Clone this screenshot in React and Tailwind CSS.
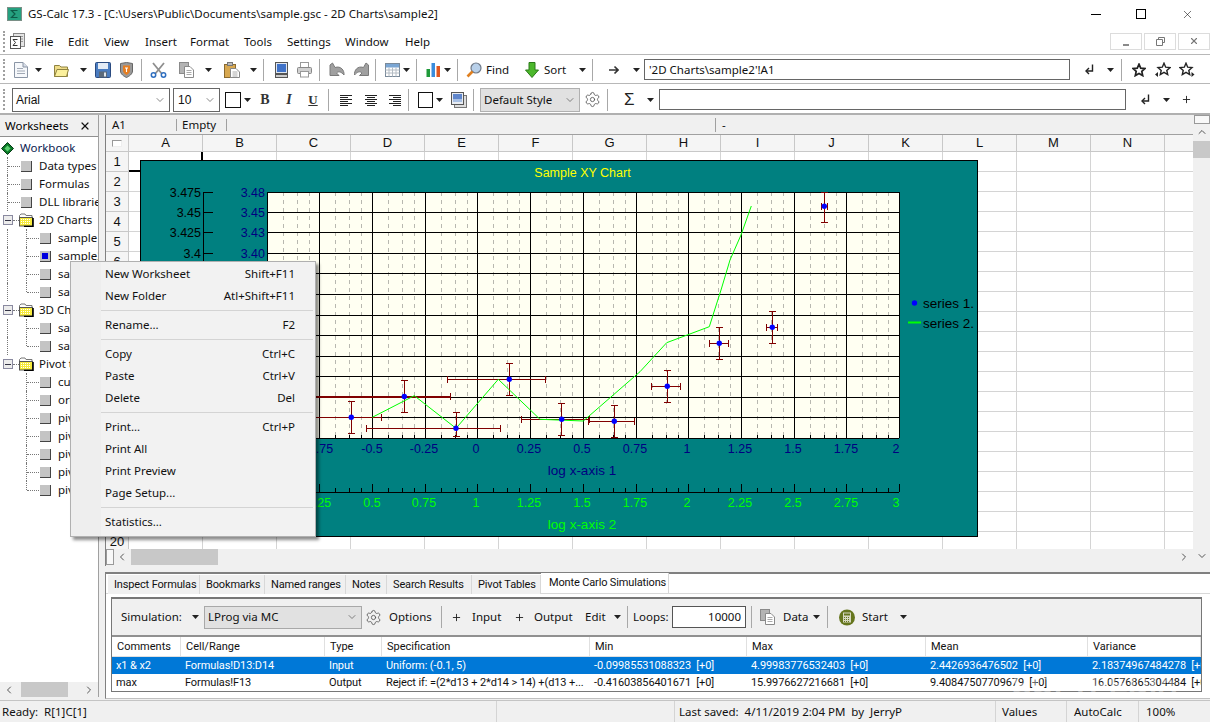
import React from "react";
import { ChevronDown, ChevronLeft, ChevronRight, ChevronUp, Settings, X, Plus } from "lucide-react";

const Caret = ({ className = "" }) => (
  <svg width="7" height="4" viewBox="0 0 7 4" className={`shrink-0 ${className}`}>
    <polygon points="0,0 7,0 3.5,4" fill="#222" />
  </svg>
);
const Sep = ({ className = "" }) => <span className={`w-px h-[22px] bg-[#a8a8a8] shrink-0 ${className}`} />;
const Gripper = () => <span className="ml-[3px] w-[2px] h-[21px] border-l-2 border-dotted border-[#a0a0a0] shrink-0" />;

const Ico = ({ w, h = 16, className = "", children }) => (
  <svg width={w} height={h} viewBox={`0 0 ${w} ${h}`} className={`shrink-0 ${className}`}>{children}</svg>
);

const Gear = ({ className = "" }) => <Settings size={17} strokeWidth={1.2} color="#555" className={`shrink-0 ${className}`} />;
const SelectChevron = () => <ChevronDown size={12} strokeWidth={1.4} color="#555" className="shrink-0" />;

const ReturnIcon = ({ className = "" }) => (
  <Ico w={9} h={11} className={className}>
    <path d="M7.5 0.5V7H2" fill="none" stroke="#222" strokeWidth="1.4" />
    <path d="M4 4L1 7L4 10" fill="none" stroke="#222" strokeWidth="1.4" />
  </Ico>
);

const AlignIcon = ({ d, className = "" }) => (
  <Ico w={14} h={12} className={className}>
    <path d={d} stroke="#222" strokeWidth="1" fill="none" />
  </Ico>
);

const CopyIcon = ({ className = "" }) => (
  <Ico w={15} className={className}>
    <rect x="0.5" y="0.5" width="9" height="11" fill="#b4b4b4" stroke="#8a8a8a" />
    <path d="M5.5 4.5H11L14.5 8V15.5H5.5Z" fill="#fff" stroke="#8a8a8a" />
    <path d="M7.5 8.5h5M7.5 10.5h5M7.5 12.5h5" stroke="#aaa" />
  </Ico>
);

const StarPath = "M7 1.2L8.7 5.2L13 5.6L9.8 8.4L10.7 12.6L7 10.4L3.3 12.6L4.2 8.4L1 5.6L5.3 5.2Z";

const menus = [
  { t: "File", c: "w-[33px]" }, { t: "Edit", c: "w-[36px]" }, { t: "View", c: "w-[41px]" },
  { t: "Insert", c: "w-[45px]" }, { t: "Format", c: "w-[54px]" }, { t: "Tools", c: "w-[43px]" },
  { t: "Settings", c: "w-[58px]" }, { t: "Window", c: "w-[60px]" }, { t: "Help", c: "w-[30px]" },
];

function TitleBar() {
  return (
    <div className="h-[28px] flex items-center bg-white shrink-0">
      <Ico w={15} h={14} className="ml-[7px]">
        <rect x="0" y="0" width="15" height="14" fill="#7a8f86" />
        <rect x="1" y="1" width="13" height="12" fill="#25a07f" />
        <path d="M10.5 3.5H4.5L8 7L4.5 10.5H10.5" fill="none" stroke="#0e5a48" strokeWidth="1.2" />
      </Ico>
      <span className="ml-[6px] text-[11.5px] text-[#111] whitespace-nowrap">GS-Calc 17.3 - [C:\Users\Public\Documents\sample.gsc - 2D Charts\sample2]</span>
      <div className="ml-auto flex items-center">
        <span className="w-[10px] h-px bg-black" />
        <span className="ml-[35px] w-[10px] h-[10px] border border-black" />
        <X size={13} strokeWidth={1} color="#000" className="ml-[35px] mr-[16px]" />
      </div>
    </div>
  );
}

function MenuBar() {
  return (
    <div className="h-[27px] flex items-center bg-white border-b border-[#b8b8b8] shrink-0">
      <Gripper />
      <Ico w={15} h={16} className="ml-[5px]">
        <rect x="3.5" y="0.5" width="11" height="13" fill="#e4e4e4" stroke="#8a8a8a" />
        <path d="M10 3.5h3M10 6h3M10 8.5h3" stroke="#999" />
        <rect x="0.5" y="3.5" width="10" height="12" fill="#fff" stroke="#555" />
        <path d="M7.5 6.5H3L5.5 9.5L3 12.5H7.5" fill="none" stroke="#333" />
      </Ico>
      <div className="ml-[10px] pt-[2px] flex text-[11.5px] text-[#111]">
        {menus.map((m) => <span key={m.t} className={m.c}>{m.t}</span>)}
      </div>
      <div className="ml-auto flex gap-[2px] text-[#8a8a8a]">
        <span className="w-[32px] h-[17px] border border-[#dcdcdc] flex items-end justify-center pb-[3px]"><span className="w-[6px] h-[2px] bg-[#8a8a8a]" /></span>
        <span className="w-[32px] h-[17px] border border-[#dcdcdc] flex items-center justify-center">
          <Ico w={9} h={9}><path d="M2.5 2.5V0.5H8.5V5.5H6.5M0.5 2.5H6.5V8.5H0.5Z" fill="none" stroke="#777" /></Ico>
        </span>
        <span className="w-[32px] h-[17px] border border-[#dcdcdc] flex items-center justify-center"><X size={10} strokeWidth={2.6} color="#777" /></span>
      </div>
    </div>
  );
}

function Toolbar1() {
  return (
    <div className="h-[29px] pt-[1px] flex items-center bg-white border-b border-[#b8b8b8] shrink-0 text-[11.5px] text-[#111]">
      <Gripper />
      <Ico w={14} className="ml-[9px]">
        <path d="M0.5 0.5H9L13.5 5V15.5H0.5Z" fill="#f6f8fb" stroke="#8a95a5" />
        <path d="M9 0.5V5H13.5" fill="#d8dee8" stroke="#8a95a5" />
        <path d="M3 6.5h6M3 9h8M3 11.5h8" stroke="#a0a8b4" />
      </Ico>
      <Caret className="ml-[7px]" />
      <Ico w={15} className="ml-[12px]">
        <path d="M0.5 3.5H5.5L7 5H13.5V14.5H0.5Z" fill="#efdc88" stroke="#8f8340" />
        <path d="M0.5 14.5L3 7.5H14.5L12.5 14.5Z" fill="#fbf09c" stroke="#8f8340" />
      </Ico>
      <Caret className="ml-[11px]" />
      <Ico w={16} className="ml-[8px]">
        <rect x="0.5" y="0.5" width="15" height="15" rx="1" fill="#4a7cc0" stroke="#2a4a80" />
        <rect x="3" y="1" width="10" height="6" fill="#e4ecf6" />
        <rect x="4" y="9.5" width="8" height="6" fill="#5c6a7a" />
        <rect x="9" y="10.5" width="2" height="4" fill="#dfe6ee" />
      </Ico>
      <Ico w={13} className="ml-[9px]">
        <path d="M0.5 1.5L6.5 0.5L12.5 1.5V9C12.5 12 9 14.5 6.5 15.5C4 14.5 0.5 12 0.5 9Z" fill="#9a9a9a" stroke="#666" />
        <path d="M3 3.5H10V8.5C10 10.5 8 12 6.5 13C5 12 3 10.5 3 8.5Z" fill="#e67e22" />
        <path d="M5 6H8M6.5 6V10" stroke="#fff" strokeWidth="1.1" />
      </Ico>
      <Sep className="ml-[8px]" />
      <Ico w={17} className="ml-[8px]">
        <path d="M3 1L12 12M14 1L5 12" stroke="#8e8e8e" strokeWidth="1.8" />
        <circle cx="3.5" cy="13" r="2.2" fill="none" stroke="#2f6fc0" strokeWidth="1.5" />
        <circle cx="13.5" cy="13" r="2.2" fill="none" stroke="#2f6fc0" strokeWidth="1.5" />
      </Ico>
      <CopyIcon className="ml-[12px]" />
      <Caret className="ml-[11px]" />
      <Ico w={16} className="ml-[12px]">
        <rect x="0.5" y="2.5" width="11" height="13" fill="#d8a850" stroke="#8a6a30" />
        <rect x="3.5" y="0.5" width="5" height="3" fill="#bbb" stroke="#777" />
        <path d="M6.5 6.5H12L15.5 10V15.5H6.5Z" fill="#fff" stroke="#888" />
        <path d="M8.5 10h5M8.5 12h5M8.5 14h5" stroke="#aaa" />
      </Ico>
      <Caret className="ml-[10px]" />
      <Sep className="ml-[6px]" />
      <Ico w={13} className="ml-[11px]">
        <rect x="0.5" y="0.5" width="12" height="11" fill="#dfe6f0" stroke="#555" />
        <rect x="2" y="2" width="9" height="8" fill="#3f72c8" />
        <rect x="0.5" y="12.5" width="12" height="3" fill="#ccc" stroke="#555" />
      </Ico>
      <Ico w={15} className="ml-[9px]">
        <rect x="3.5" y="0.5" width="8" height="5" fill="#fff" stroke="#999" />
        <rect x="0.5" y="5.5" width="14" height="6" rx="1" fill="#d0d0d0" stroke="#888" />
        <rect x="3.5" y="9.5" width="8" height="5.5" fill="#fff" stroke="#999" />
      </Ico>
      <Sep className="ml-[7px]" />
      <Ico w={16} className="ml-[9px]">
        <path d="M1 3V13.5H10L7.5 11C9.5 9 12 9.5 15 13C15.5 8.5 12 3.5 6 5.5L3.5 1Z" fill="#a0a0a0" stroke="#7a7a7a" />
      </Ico>
      <Ico w={15} className="ml-[9px]">
        <path d="M14.5 3V13.5H5.5L8 11C6 9 3.5 9.5 0.5 13C0 8.5 3.5 3.5 9.5 5.5L12 1Z" fill="#a0a0a0" stroke="#7a7a7a" />
      </Ico>
      <Sep className="ml-[6px]" />
      <Ico w={15} className="ml-[9px]">
        <rect x="0.5" y="1.5" width="14" height="13" fill="#fff" stroke="#7a8a9a" />
        <rect x="1" y="2" width="13" height="3.5" fill="#7aa6d4" />
        <path d="M0.5 8h14M0.5 11h14M4 5.5v9M7.5 5.5v9M11 5.5v9" stroke="#b4bcc4" />
      </Ico>
      <Caret className="ml-[3px]" />
      <Sep className="ml-[6px]" />
      <Ico w={15} className="ml-[9px]">
        <rect x="0.5" y="7" width="3.5" height="8" fill="#1f9a3a" />
        <rect x="5.5" y="1" width="3.5" height="14" fill="#3a8cdc" />
        <rect x="10.5" y="4" width="3.5" height="11" fill="#e0561f" />
      </Ico>
      <Caret className="ml-[3px]" />
      <Sep className="ml-[6px]" />
      <Ico w={16} className="ml-[8px]">
        <circle cx="10" cy="6" r="5" fill="#b8d0ea" stroke="#707a88" strokeWidth="1.2" />
        <path d="M6.5 9.5L1.5 14.5" stroke="#e08020" strokeWidth="2.6" />
      </Ico>
      <span className="ml-[4px] w-[26px]">Find</span>
      <Ico w={14} className="ml-[13px]">
        <path d="M4 0.5H10V8H13.5L7 15.5L0.5 8H4Z" fill="#4cb82c" stroke="#2a7a18" />
      </Ico>
      <span className="ml-[5px] w-[26px]">Sort</span>
      <Caret className="ml-[9px]" />
      <Sep className="ml-[6px]" />
      <Ico w={10} h={10} className="ml-[16px]">
        <path d="M0 5H8.5M5.5 1.5L9 5L5.5 8.5" fill="none" stroke="#333" strokeWidth="1.6" />
      </Ico>
      <Caret className="ml-[14px]" />
      <div className="ml-[4px] w-[426px] h-[21px] border border-[#666] bg-white flex items-center px-[4px] whitespace-nowrap">'2D Charts\sample2'!A1</div>
      <ReturnIcon className="ml-[15px]" />
      <Caret className="ml-[13px]" />
      <Sep className="ml-[7px]" />
      <Ico w={14} h={14} className="ml-[10px]"><path d={StarPath} fill="none" stroke="#222" strokeWidth="1.7" /></Ico>
      <Ico w={16} h={16} className="ml-[9px]">
        <path d={StarPath} transform="translate(2 0)" fill="none" stroke="#222" strokeWidth="1.4" />
        <polygon points="0,12.5 3,10 3,15" fill="#222" />
      </Ico>
      <Ico w={16} h={16} className="ml-[8px]">
        <path d={StarPath} fill="none" stroke="#222" strokeWidth="1.4" />
        <polygon points="15.5,12.5 12.5,10 12.5,15" fill="#222" />
      </Ico>
    </div>
  );
}

function Toolbar2() {
  return (
    <div className="h-[31px] pt-[2px] flex items-center bg-white border-b-2 border-[#b0b0b0] shrink-0 text-[11.5px] text-[#111]">
      <Gripper />
      <div className="ml-[7px] w-[158px] h-[24px] border border-[#666] flex items-center pl-[3px] pr-[3px] justify-between font-['Liberation_Sans'] text-[12px]">
        <span>Arial</span><SelectChevron />
      </div>
      <div className="ml-[3px] w-[47px] h-[24px] border border-[#666] flex items-center pl-[4px] pr-[3px] justify-between font-['Liberation_Sans'] text-[12px]">
        <span>10</span><SelectChevron />
      </div>
      <span className="ml-[5px] w-[16px] h-[16px] border border-[#111] bg-white shrink-0" />
      <Caret className="ml-[3px]" />
      <span className="ml-[9px] w-[10px] text-center font-['Liberation_Serif'] font-bold text-[14px] text-[#333]">B</span>
      <span className="ml-[14px] w-[10px] text-center font-['Liberation_Serif'] font-bold italic text-[14px] text-[#333]">I</span>
      <span className="ml-[14px] w-[10px] text-center font-['Liberation_Serif'] font-bold underline text-[13px] text-[#333]">U</span>
      <Sep className="ml-[10px]" />
      <AlignIcon className="ml-[10px]" d="M1 1.5H13M1 3.5H9M1 5.5H13M1 7.5H9M1 9.5H13M1 11.5H9" />
      <AlignIcon className="ml-[11px]" d="M1 1.5H13M3 3.5H11M1 5.5H13M3 7.5H11M1 9.5H13M3 11.5H11" />
      <AlignIcon className="ml-[10px]" d="M1 1.5H13M5 3.5H13M1 5.5H13M5 7.5H13M1 9.5H13M5 11.5H13" />
      <Sep className="ml-[6px]" />
      <span className="ml-[9px] w-[15px] h-[16px] border border-[#111] bg-white shrink-0" />
      <Caret className="ml-[3px]" />
      <Ico w={16} className="ml-[8px]">
        <rect x="3.5" y="3.5" width="12" height="12" fill="#ddd" stroke="#777" />
        <rect x="0.5" y="0.5" width="12" height="12" fill="#e8ecf2" stroke="#555" />
        <rect x="2" y="2" width="9" height="5" fill="#5f86cc" />
        <rect x="2" y="7" width="9" height="3" fill="#a8c0e4" />
      </Ico>
      <Sep className="ml-[6px]" />
      <div className="ml-[6px] w-[100px] h-[24px] border border-[#b0b0b0] bg-[#e1e1e1] flex items-center pl-[3px] pr-[3px] justify-between whitespace-nowrap">
        <span>Default Style</span><SelectChevron />
      </div>
      <Gear className="ml-[4px]" />
      <Sep className="ml-[6px]" />
      <span className="ml-[16px] w-[10px] text-center text-[17px] leading-none font-['Liberation_Sans'] text-[#222]">Σ</span>
      <Caret className="ml-[13px]" />
      <div className="ml-[5px] w-[467px] h-[21px] border border-[#666] bg-white" />
      <ReturnIcon className="ml-[15px]" />
      <Caret className="ml-[13px]" />
      <Plus size={11} strokeWidth={2} color="#222" className="ml-[11px] shrink-0" />
    </div>
  );
}

const Square = ({ active }) => (
  <span className="w-[11px] h-[11px] shrink-0 bg-[#c4c4c4] border-r border-b border-[#444] flex items-center justify-center">
    {active && <span className="w-[6px] h-[6px] bg-[#0000e0]" />}
  </span>
);

const Folder = () => (
  <Ico w={15} h={14} className="shrink-0">
    <path d="M0.5 4V2.5L2 1H6L7 2.5H13V5" fill="#fff" stroke="#777" />
    <rect x="0.5" y="4.5" width="13" height="8.5" fill="#f6ea3c" stroke="#555" />
    <path d="M2 6.5h10M2 8.5h10M2 10.5h10" stroke="#fff" strokeDasharray="1 1" />
    <path d="M14 5V13.5H5" stroke="#000" strokeWidth="1.6" fill="none" />
  </Ico>
);

const VLine = ({ half, none, className = "" }) => (
  <span className={`w-px shrink-0 self-start ${none ? "" : "border-l border-dotted border-[#777]"} ${half ? "h-[9px]" : "h-[18px]"} ${className}`} />
);
const HLine = ({ className = "" }) => <span className={`h-0 border-t border-dotted border-[#777] shrink-0 ${className}`} />;

const Leaf1 = ({ t }) => (
  <div className="h-[18px] flex items-center">
    <VLine className="ml-[7px]" />
    <HLine className="w-[12px]" />
    <span className="ml-[1px]"><Square /></span>
    <span className="ml-[7px] whitespace-nowrap">{t}</span>
  </div>
);
const Leaf2 = ({ t, last, active, end }) => (
  <div className="h-[18px] flex items-center">
    <VLine className="ml-[7px]" none={end} />
    <VLine className="ml-[18px]" half={last} />
    <HLine className="w-[12px]" />
    <span className="ml-[1px]"><Square active={active} /></span>
    <span className="ml-[7px] whitespace-nowrap">{t}</span>
  </div>
);
const FolderRow = ({ t }) => (
  <div className="h-[18px] flex items-center">
    <span className="ml-[3px] w-[10px] h-[10px] border border-[#8a8aa0] bg-[#ececec] flex items-center justify-center shrink-0"><span className="w-[6px] h-px bg-[#334]" /></span>
    <HLine className="w-[6px]" />
    <Folder />
    <span className="ml-[5px] whitespace-nowrap">{t}</span>
  </div>
);

function Tree() {
  return (
    <div className="w-[99px] shrink-0 flex flex-col border-r border-[#a0a0a0] h-[582px]">
      <div className="h-[22px] shrink-0 flex items-center justify-between pl-[5px] pr-[7px] bg-[#f0f0f0] border-b border-[#909090] text-[11.5px]">
        <span className="pt-[1px]">Worksheets</span><X size={12} strokeWidth={2.4} color="#111" />
      </div>
      <div className="flex-1 bg-white overflow-hidden text-[11.5px] text-[#111]">
        <div className="h-[18px] mt-[2px] flex items-center">
          <Ico w={13} h={13} className="ml-[1px]">
            <polygon points="6.5,0.5 12.5,6.5 6.5,12.5 0.5,6.5" fill="#0a7a28" stroke="#063a14" />
            <polygon points="6.5,3.5 9.5,6.5 6.5,9.5 3.5,6.5" fill="#5cd070" />
          </Ico>
          <span className="ml-[6px] text-[#0a1a50]">Workbook</span>
        </div>
        <Leaf1 t="Data types" />
        <Leaf1 t="Formulas" />
        <Leaf1 t="DLL libraries" />
        <FolderRow t="2D Charts" />
        <Leaf2 t="sample1" />
        <Leaf2 t="sample2" active />
        <Leaf2 t="sample3" />
        <Leaf2 t="sample4" last />
        <FolderRow t="3D Charts" />
        <Leaf2 t="sample1" />
        <Leaf2 t="sample2" last />
        <FolderRow t="Pivot tables" />
        <Leaf2 t="customers" end />
        <Leaf2 t="orders" end />
        <Leaf2 t="pivot1" end />
        <Leaf2 t="pivot2" end />
        <Leaf2 t="pivot3" end />
        <Leaf2 t="pivot4" end />
        <Leaf2 t="pivot5" end last />
      </div>
      <div className="h-[15px] shrink-0 bg-[#f0f0f0] flex items-center text-[#555]">
        <ChevronLeft size={12} strokeWidth={2} className="ml-[3px] shrink-0" />
        <span className="ml-[6px] w-[47px] h-[15px] bg-[#c8c8c8] shrink-0" />
        <ChevronRight size={12} strokeWidth={2} className="ml-[15px] shrink-0" />
      </div>
    </div>
  );
}

const majorsX = [267, 319.7, 372.4, 425.1, 477.8, 530.5, 583.2, 636, 688.6, 741.3, 794, 846.7, 899];
const gridY = [192, 212, 232, 253, 273, 294, 315, 335, 356, 376, 397, 417, 438];
const minorOff = [16, 30, 42];
const minorsX = majorsX.slice(0, -1).flatMap((x) => minorOff.map((o) => x + o));
const axisLabels = [
  [319, "-0.75", "0.25"], [372, "-0.5", "0.5"], [424, "-0.25", "0.75"], [476, "0", "1"], [529, "0.25", "1.25"],
  [582, "0.5", "1.5"], [635, "0.75", "1.75"], [687, "1", "2"], [740, "1.25", "2.25"], [793, "1.5", "2.5"],
  [846, "1.75", "2.75"], [896, "2", "3"],
];
const yLabels = [[192, "3.475", "3.48"], [212, "3.45", "3.45"], [232, "3.425", "3.43"], [253, "3.4", "3.40"]];
const points = [
  [351.3, 417.3, 401.3, 433.3, 290, 381.7],
  [404.3, 396.5, 380.3, 412.3, 262, 450.7],
  [456, 428.3, 412.3, 436, 366.7, 500.3],
  [509.3, 379.3, 363.7, 395.3, 447.3, 545.7],
  [561.7, 419.3, 403.3, 435.7, 521.3, 589.3],
  [614.3, 421.3, 405.7, 437.7, 588.7, 634.7],
  [667.3, 386.3, 370.7, 402.3, 651.7, 680.7],
  [719.3, 343.3, 327.3, 359.3, 709.3, 728.7],
  [772.3, 327.3, 311.7, 343.3, 766.7, 777.7],
  [824.3, 206.3, 192.7, 222.3, 821.7, 827.7],
];
const greenLine = "372.3,417.3 414.3,395.7 456,428.3 498.3,379.3 540,419.3 583.3,421 640,371.7 666.7,342.7 709.3,326.7 721,290 730,260 741,235 751.3,206";

function Chart() {
  return (
    <svg
      viewBox="140 160 839 378"
      width="839"
      height="378"
      className="absolute left-[34px] top-[8px] font-['Liberation_Sans']"
    >
      <rect x="140.5" y="160.5" width="837" height="376" fill="#008080" stroke="#000" />
      <text x="582.5" y="177" textAnchor="middle" fontSize="12.5" fill="#ffff00">Sample XY Chart</text>
      <rect x="267" y="192" width="632" height="246" fill="#fffff2" />
      {minorsX.map((x, i) => (
        <line key={i} x1={x} x2={x} y1="192" y2="438" stroke="#b8b8b0" strokeDasharray="4 4" shapeRendering="crispEdges" />
      ))}
      {minorsX.map((x, i) => (
        <line key={i} x1={x} x2={x} y1="435" y2="438" stroke="#000" shapeRendering="crispEdges" />
      ))}
      {majorsX.map((x, i) => (
        <line key={i} x1={x} x2={x} y1="192" y2="438" stroke="#000" shapeRendering="crispEdges" />
      ))}
      {gridY.map((y, i) => (
        <line key={i} x1="267" x2="899" y1={y} y2={y} stroke="#000" shapeRendering="crispEdges" />
      ))}
      <line x1="203.5" x2="203.5" y1="192" y2="300" stroke="#000" shapeRendering="crispEdges" />
      {yLabels.map(([y, a, b]) => (
        <g key={y}>
          <line x1="203" x2="213" y1={y} y2={y} stroke="#000" shapeRendering="crispEdges" />
          <text x="201" y={y + 4.5} textAnchor="end" fontSize="12.5" fill="#000">{a}</text>
          <text x="265" y={y + 4.5} textAnchor="end" fontSize="12.5" fill="#000080">{b}</text>
        </g>
      ))}
      {points.map(([cx, cy, t, b, l, r], i) => (
        <g key={i} stroke="#800000" shapeRendering="crispEdges">
          <line x1={cx} x2={cx} y1={t} y2={b} />
          <line x1={cx - 3.5} x2={cx + 3.5} y1={t} y2={t} />
          <line x1={cx - 3.5} x2={cx + 3.5} y1={b} y2={b} />
          <line x1={l} x2={r} y1={cy} y2={cy} strokeWidth={i === 1 ? 2 : 1} />
          <line x1={r} x2={r} y1={cy - 3.5} y2={cy + 3.5} />
          <line x1={l} x2={l} y1={cy - 3.5} y2={cy + 3.5} />
        </g>
      ))}
      <polyline points={greenLine} fill="none" stroke="#00ff00" strokeWidth="1" />
      {points.map(([cx, cy], i) => <circle key={i} cx={cx} cy={cy} r="2.7" fill="#0000ff" />)}
      {axisLabels.map(([x, a, b]) => (
        <g key={x} fontSize="12.5" textAnchor="middle">
          <text x={x} y="453" fill="#000080">{a}</text>
          <text x={x} y="507" fill="#00ff00">{b}</text>
        </g>
      ))}
      <text x="582" y="475" textAnchor="middle" fontSize="13.5" fill="#000080">log x-axis 1</text>
      <text x="582" y="529" textAnchor="middle" fontSize="13.5" fill="#00ff00">log x-axis 2</text>
      <line x1="267" x2="899" y1="492" y2="492" stroke="#000" shapeRendering="crispEdges" />
      {majorsX.map((x, i) => <line key={i} x1={x} x2={x} y1="484" y2="492" stroke="#000" shapeRendering="crispEdges" />)}
      {minorsX.map((x, i) => <line key={i} x1={x} x2={x} y1="488" y2="492" stroke="#000" shapeRendering="crispEdges" />)}
      <circle cx="914.5" cy="303" r="2.7" fill="#0000ff" />
      <line x1="908" x2="921" y1="322.5" y2="322.5" stroke="#00ff00" strokeWidth="2" />
      <text x="923" y="307.5" fontSize="13.5" fill="#000">series 1.</text>
      <text x="923" y="327.5" fontSize="13.5" fill="#000">series 2.</text>
    </svg>
  );
}

const cols = ["A", "B", "C", "D", "E", "F", "G", "H", "I", "J", "K", "L", "M", "N", "O"];
const rows = Array.from({ length: 20 }, (_, i) => i + 1);

function Sheet() {
  return (
    <div className="h-[451px] flex border-l border-[#808080] bg-[#f0f0f0] shrink-0">
      <div className="w-[1087px] shrink-0 flex flex-col overflow-hidden">
        <div className="h-[20px] shrink-0 flex items-center text-[11.5px] text-[#111] border-b border-[#a0a0a0]">
          <span className="ml-[6px] w-[64px]">A1</span>
          <span className="w-px h-[12px] bg-[#a0a0a0]" />
          <span className="ml-[5px] w-[44px]">Empty</span>
          <span className="w-px h-[12px] bg-[#a0a0a0]" />
          <span className="ml-[488px] w-px h-[14px] bg-[#a0a0a0]" />
          <span className="ml-[6px]">-</span>
        </div>
        <div className="h-[17px] shrink-0 flex font-['Liberation_Sans'] text-[13px] text-[#111] bg-[#f5f5f5]">
          <div className="w-[23px] shrink-0 border-r border-b border-[#c8c8c8] flex items-center justify-center">
            <span className="w-[10px] h-[7px] border border-[#999] border-r-[#eee] border-b-[#eee] bg-white" />
          </div>
          {cols.map((c) => (
            <div key={c} className="w-[74px] shrink-0 border-r border-b border-[#c8c8c8] flex items-center justify-center">{c}</div>
          ))}
        </div>
        <div className="relative h-[397px] shrink-0 overflow-hidden bg-white">
          {rows.map((r) => (
            <div key={r} className="h-[20px] flex">
              <div className="w-[23px] shrink-0 bg-[#f5f5f5] border-r border-b border-[#c8c8c8] flex items-center justify-center font-['Liberation_Sans'] text-[13px] text-[#111]">{r}</div>
              {cols.map((c) => (
                <div key={c} className={`w-[74px] shrink-0 ${r === 1 && c === "A" ? "border-r-2 border-b-2 border-black" : "border-r border-b border-[#d4d4d4]"}`} />
              ))}
            </div>
          ))}
          <Chart />
        </div>
        <div className="h-[16px] shrink-0 flex items-center text-[#555] bg-[#f0f0f0]">
          <span className="w-[8px] h-[16px] border border-[#999] bg-[#f8f8f8] shrink-0" />
          <ChevronLeft size={12} strokeWidth={2} className="ml-[2px] shrink-0" />
          <span className="ml-[3px] w-[87px] h-[16px] bg-[#c8c8c8] shrink-0" />
          <ChevronRight size={12} strokeWidth={2} className="ml-[960px] shrink-0" />
        </div>
      </div>
      <div className="w-[17px] shrink-0 flex flex-col items-center text-[#555] bg-[#f0f0f0]">
        <span className="w-[16px] h-[9px] border border-[#999] bg-[#f8f8f8] shrink-0" />
        <ChevronUp size={12} strokeWidth={2} className="mt-[2px] shrink-0" />
        <span className="mt-[3px] w-[17px] h-[17px] bg-[#c8c8c8] shrink-0" />
        <ChevronDown size={12} strokeWidth={2} className="mt-[392px] shrink-0" />
      </div>
    </div>
  );
}

const tabs = [
  { t: "Inspect Formulas", c: "w-[92px]" }, { t: "Bookmarks", c: "w-[65px]" }, { t: "Named ranges", c: "w-[81px]" },
  { t: "Notes", c: "w-[41px]" }, { t: "Search Results", c: "w-[85px]" }, { t: "Pivot Tables", c: "w-[69px]" },
];
const gridCols = "grid grid-cols-[69px_144px_57px_208px_157px_179px_162px_113px]";
const head = ["Comments", "Cell/Range", "Type", "Specification", "Min", "Max", "Mean", "Variance"];
const row1 = ["x1 & x2", "Formulas!D13:D14", "Input", "Uniform: (-0.1, 5)", "-0.09985531088323  [+0]", "4.99983776532403  [+0]", "2.4426936476502  [+0]", "2.18374967484278  [+0]"];
const row2 = ["max", "Formulas!F13", "Output", "Reject if: =(2*d13 + 2*d14 > 14) +(d13 +...", "-0.41603856401671  [+0]", "15.9976627216681  [+0]", "9.40847507709679  [+0]", "16.0576865304484  [+0]"];

function BottomPanel() {
  return (
    <div className="mt-[6px] h-[127px] border-t-2 border-l border-[#808080] border-b border-b-[#c0c0c0] bg-white flex flex-col text-[11.5px] text-[#111] shrink-0">
      <div className="h-[20px] shrink-0 flex border-b border-[#d8d8d8] font-['Roboto'] text-[11px] tracking-[-0.15px]">
        <div className="ml-[2px] mt-[1px] h-[19px] flex bg-[#f0f0f0]">
          {tabs.map((t) => (
            <span key={t.t} className={`${t.c} h-full flex items-center pl-[6px] pt-[1px] border-r border-[#d8d8d8] whitespace-nowrap overflow-hidden`}>{t.t}</span>
          ))}
        </div>
        <span className="w-[128px] h-[20px] pl-[8px] -mt-px bg-white border-r border-[#d8d8d8] whitespace-nowrap flex items-center">Monte Carlo Simulations</span>
      </div>
      <div className="ml-[5px] mt-[3px] w-[1091px] h-[95px] flex flex-col border-t-2 border-l border-r border-b border-[#777]">
        <div className="h-[38px] shrink-0 bg-[#f0f0f0] flex items-center whitespace-nowrap border-b-2 border-[#909090]">
          <span className="ml-[9px] w-[71px]">Simulation:</span>
          <Caret />
          <div className="ml-[5px] w-[158px] h-[23px] border border-[#a8a8a8] bg-[#e1e1e1] flex items-center justify-between pl-[3px] pr-[3px]">
            <span>LProg via MC</span><SelectChevron />
          </div>
          <Gear className="ml-[3px]" />
          <span className="ml-[7px] w-[44px]">Options</span>
          <Sep className="ml-[8px]" />
          <Plus size={11} strokeWidth={2} color="#222" className="ml-[9px] shrink-0" />
          <span className="ml-[10px] w-[36px]">Input</span>
          <Plus size={11} strokeWidth={2} color="#222" className="ml-[6px] shrink-0" />
          <span className="ml-[9px] w-[44px]">Output</span>
          <span className="ml-[7px] w-[24px]">Edit</span>
          <Caret className="ml-[5px]" />
          <Sep className="ml-[6px]" />
          <span className="ml-[5px] w-[34px]">Loops:</span>
          <div className="ml-[5px] w-[74px] h-[22px] border border-[#555] bg-white flex items-center justify-end pr-[4px]">10000</div>
          <Sep className="ml-[5px]" />
          <CopyIcon className="ml-[8px]" />
          <span className="ml-[8px] w-[29px]">Data</span>
          <Caret className="ml-[1px]" />
          <Sep className="ml-[7px]" />
          <Ico w={16} h={17} className="ml-[11px]">
            <circle cx="8" cy="8.5" r="8" fill="#66761e" />
            <rect x="4" y="3.5" width="8" height="10" fill="#d6d8c0" />
            <rect x="5" y="4.5" width="6" height="2" fill="#66761e" />
            <path d="M5 8.5h6M5 10.5h6M5 12.5h6" stroke="#66761e" strokeDasharray="1 1" />
          </Ico>
          <span className="ml-[7px] w-[32px]">Start</span>
          <Caret className="ml-[6px]" />
        </div>
        <div className={`${gridCols} h-[20px] shrink-0 bg-white border-b border-[#e0e0e0] font-['Roboto'] text-[11px]`}>
          {head.map((h) => (
            <span key={h} className="flex items-center pl-[5px] pt-[2px] border-r border-[#e0e0e0]">{h}</span>
          ))}
        </div>
        <div className={`${gridCols} h-[17px] shrink-0 bg-[#0078d7] text-white font-['Roboto'] text-[11px]`}>
          {row1.map((h, i) => (
            <span key={i} className="flex items-center pl-[4px] pt-[1px] whitespace-pre overflow-hidden tracking-[-0.1px]">{h}</span>
          ))}
        </div>
        <div className={`${gridCols} h-[17px] shrink-0 bg-white font-['Roboto'] text-[11px]`}>
          {row2.map((h, i) => (
            <span key={i} className="flex items-center pl-[4px] pt-[1px] whitespace-pre overflow-hidden tracking-[-0.1px]">{h}</span>
          ))}
        </div>
      </div>
    </div>
  );
}

function StatusBar() {
  return (
    <div className="h-[22px] shrink-0 flex items-center bg-[#f0f0f0] border-t border-[#c4c4c4] text-[11.5px] text-[#111] whitespace-pre">
      <span className="ml-[2px] w-[494px]">Ready:  R[1]C[1]</span>
      <span className="h-full w-px bg-[#d4d4d4]" />
      <span className="w-[177px]" />
      <span className="h-full w-px bg-[#d4d4d4]" />
      <span className="pl-[4px] w-[320px]">Last saved:  4/11/2019 2:04 PM  by  JerryP</span>
      <span className="h-full w-px bg-[#d4d4d4]" />
      <span className="pl-[6px] w-[70px]">Values</span>
      <span className="h-full w-px bg-[#d4d4d4]" />
      <span className="pl-[7px] w-[71px]">AutoCalc</span>
      <span className="h-full w-px bg-[#d4d4d4]" />
      <span className="pl-[7px]">100%</span>
    </div>
  );
}

const menuItems = [
  ["New Worksheet", "Shift+F11"], ["New Folder", "Atl+Shift+F11"], null, ["Rename...", "F2"], null,
  ["Copy", "Ctrl+C"], ["Paste", "Ctrl+V"], ["Delete", "Del"], null,
  ["Print...", "Ctrl+P"], ["Print All", ""], ["Print Preview", ""], ["Page Setup...", ""], null, ["Statistics...", ""],
];

function ContextMenu() {
  return (
    <div className="absolute left-[70px] top-[261px] w-[246px] h-[276px] bg-[#f2f2f2] border border-[#b0b0b0] shadow-[3px_3px_3px_rgba(0,0,0,0.45)] flex text-[11.5px] text-[#111]">
      <div className="w-[30px] shrink-0 bg-[#eeeeee]" />
      <div className="flex-1 pt-px">
        {menuItems.map((m, i) =>
          m ? (
            <div key={i} className="h-[22px] flex items-center justify-between pl-[4px] pr-[20px] whitespace-nowrap">
              <span>{m[0]}</span><span>{m[1]}</span>
            </div>
          ) : (
            <div key={i} className="h-[7px] flex items-center pr-[2px]"><span className="w-full h-px bg-[#d4d4d4]" /></div>
          )
        )}
      </div>
    </div>
  );
}

export default function App() {
  return (
    <div className="relative w-[1210px] h-[722px] overflow-hidden flex flex-col bg-[#f0f0f0] font-['Noto_Sans',sans-serif]">
      <TitleBar />
      <MenuBar />
      <Toolbar1 />
      <Toolbar2 />
      <div className="h-[585px] flex shrink-0">
        <Tree />
        <div className="ml-[6px] w-[1105px] shrink-0 flex flex-col">
          <Sheet />
          <BottomPanel />
        </div>
      </div>
      <StatusBar />
      <ContextMenu />
      <span className="absolute left-[1012px] top-[671px] text-[29px] leading-none font-bold text-white/40 font-['Liberation_Sans'] pointer-events-none">SOFTPEDIA</span>
    </div>
  );
}
